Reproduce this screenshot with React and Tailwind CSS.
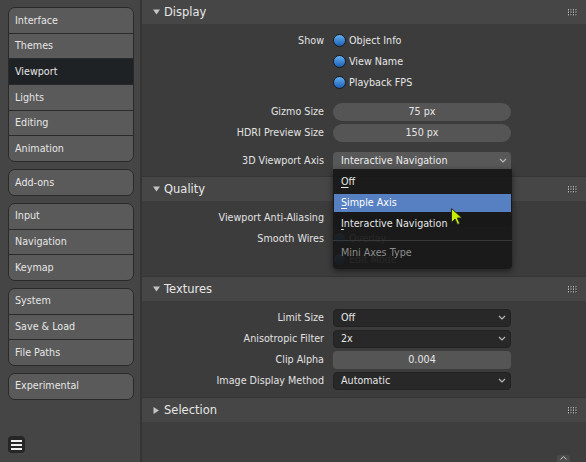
import React from "react";

const Chevron = () => (
  <svg width="8" height="5" viewBox="0 0 8 5" className="shrink-0">
    <polyline points="1,1 4,4 7,1" fill="none" stroke="#b8b8b8" strokeWidth="1.2" />
  </svg>
);

const Dots = () => (
  <svg width="9" height="7" viewBox="0 0 9 7">
    {[0, 2.5, 5, 7.5].map((x) =>
      [0, 2.5, 5].map((y) => (
        <g key={x + "-" + y}>
          <rect x={x + 0.5} y={y + 0.5} width="1" height="1.5" fill="#1e1e1e" />
          <rect x={x} y={y} width="1" height="1.5" fill="#bdbdbd" />
        </g>
      ))
    )}
  </svg>
);

function Group({ items, selected }) {
  return (
    <div className="w-[126px] rounded-[7px] border border-[#2a2a2a] overflow-hidden">
      {items.map((t, i) => (
        <div
          key={t}
          className={`flex items-center pl-[6px] ${
            i > 0 ? "h-[25.7px] border-t border-[#2a2a2a]" : "h-[24.7px]"
          } ${t === selected ? "bg-[#1f2225]" : "bg-[#5a5a5a]"}`}
        >
          {t}
        </div>
      ))}
    </div>
  );
}

function Header({ title, open = true }) {
  return (
    <div className="h-[24px] bg-[#464646] flex items-center pl-[11px] pr-[9px]">
      {open ? (
        <svg width="7" height="6" viewBox="0 0 7 6">
          <polygon points="0,0.5 7,0.5 3.5,5.5" fill="#c4c4c4" />
        </svg>
      ) : (
        <svg width="7" height="7" viewBox="0 0 7 7">
          <polygon points="0.5,0 6,3.5 0.5,7" fill="#c4c4c4" />
        </svg>
      )}
      <span className="ml-[4px] pt-[2px] text-[11.5px] text-[#e6e6e6]">{title}</span>
      <div className="ml-auto">
        <Dots />
      </div>
    </div>
  );
}

function Row({ label, children, className = "" }) {
  return (
    <div className={`flex h-[21px] items-center ${className}`}>
      <div className="w-[182px] text-right text-[#e2e2e2] whitespace-nowrap">{label}</div>
      <div className="ml-[9px] w-[178px] flex items-center">{children}</div>
    </div>
  );
}

function Check({ text }) {
  return (
    <div className="flex items-center">
      <div className="w-[13px] h-[13px] rounded-full border border-[#1b1b1b] bg-gradient-to-b from-[#62b0f4] to-[#1c5fb4]" />
      <span className="ml-[3px] text-[#e6e6e6]">{text}</span>
    </div>
  );
}

function Slider({ text }) {
  return (
    <div className="w-full h-[18px] rounded-[9px] bg-[#555555] flex items-center justify-center text-[#e6e6e6]">
      {text}
    </div>
  );
}

function Select({ text }) {
  return (
    <div className="w-full h-[18px] rounded-[4px] bg-[#282828] border border-[#222] flex items-center pl-[7px] pr-[4px] text-[#e6e6e6]">
      <span className="flex-1">{text}</span>
      <Chevron />
    </div>
  );
}

export default function App() {
  return (
    <div className="relative flex w-[586px] h-[462px] overflow-hidden bg-[#3e3e3e] text-[9.6px] leading-none font-['DejaVu_Sans','Liberation_Sans',sans-serif] select-none">
      {/* Sidebar */}
      <aside className="w-[140px] shrink-0 bg-[#454545] flex flex-col pl-[8px] pt-[7px] text-[#e6e6e6] gap-[7px]">
        <Group
          items={["Interface", "Themes", "Viewport", "Lights", "Editing", "Animation"]}
          selected="Viewport"
        />
        <Group items={["Add-ons"]} />
        <Group items={["Input", "Navigation", "Keymap"]} />
        <Group items={["System", "Save & Load", "File Paths"]} />
        <Group items={["Experimental"]} />
        <div className="mt-auto mb-[9px] w-[17px] h-[17px] rounded-[4px] bg-[#262626] flex flex-col items-center justify-center gap-[2px]">
          <div className="w-[11px] h-[2px] bg-[#f0f0f0]" />
          <div className="w-[11px] h-[2px] bg-[#f0f0f0]" />
          <div className="w-[11px] h-[2px] bg-[#f0f0f0]" />
        </div>
      </aside>

      {/* Main */}
      <main className="flex-1 border-l-2 border-[#353535] flex flex-col">
        {/* Display */}
        <section className="border-b border-[#353535]">
          <Header title="Display" />
          <div className="bg-[#3c3c3c] pt-[6px] pb-[5px]">
            <Row label="Show">
              <Check text="Object Info" />
            </Row>
            <Row label="">
              <Check text="View Name" />
            </Row>
            <Row label="">
              <Check text="Playback FPS" />
            </Row>
            <Row label="Gizmo Size" className="mt-[8px]">
              <Slider text="75 px" />
            </Row>
            <Row label="HDRI Preview Size">
              <Slider text="150 px" />
            </Row>
            <Row label="3D Viewport Axis" className="mt-[7px]">
              <div className="w-full h-[18px] rounded-t-[4px] bg-[#585858] flex items-center pl-[8px] pr-[4px] text-[#ececec]">
                <span className="flex-1">Interactive Navigation</span>
                <Chevron />
              </div>
            </Row>
          </div>
        </section>

        {/* Quality */}
        <section className="border-b border-[#353535]">
          <Header title="Quality" />
          <div className="bg-[#3c3c3c] pt-[6px] pb-[6px]">
            <Row label="Viewport Anti-Aliasing">
              <div className="w-full h-[18px] rounded-[4px] bg-[#282828]" />
            </Row>
            <Row label="Smooth Wires">
              <Check text="Overlay" />
            </Row>
            <Row label="">
              <Check text="Edit Mode" />
            </Row>
          </div>
        </section>

        {/* Textures */}
        <section className="border-b border-[#353535]">
          <Header title="Textures" />
          <div className="bg-[#3c3c3c] pt-[6px] pb-[6px]">
            <Row label="Limit Size">
              <Select text="Off" />
            </Row>
            <Row label="Anisotropic Filter">
              <Select text="2x" />
            </Row>
            <Row label="Clip Alpha">
              <div className="w-full h-[18px] rounded-[4px] bg-[#555555] flex items-center justify-center text-[#e6e6e6]">
                0.004
              </div>
            </Row>
            <Row label="Image Display Method">
              <Select text="Automatic" />
            </Row>
          </div>
        </section>

        {/* Selection */}
        <section>
          <Header title="Selection" open={false} />
        </section>
      </main>

      {/* Dropdown menu */}
      <div className="absolute left-[333px] top-[169px] w-[179px] h-[100px] bg-[#181818]/[0.93] rounded-b-[4px] shadow-[0_2px_6px_rgba(0,0,0,0.5)] flex flex-col pt-[4px] text-[#e6e6e6]">
        <div className="h-[18px] flex items-center pl-[8px]">
          <span>
            <span className="underline underline-offset-2">O</span>ff
          </span>
        </div>
        <div className="mt-[3px] mx-[1px] h-[18px] flex items-center pl-[7px] bg-[#5680c2] text-white">
          <span>
            <span className="underline underline-offset-2">S</span>imple Axis
          </span>
        </div>
        <div className="mt-[3px] h-[18px] flex items-center pl-[8px]">
          <span>
            <span className="underline underline-offset-2">I</span>nteractive Navigation
          </span>
        </div>
        <div className="mt-[7px] border-t border-[#383838]" />
        <div className="mt-[3px] h-[18px] flex items-center pl-[8px] text-[#8c8c8c]">Mini Axes Type</div>
      </div>

      {/* Mouse cursor */}
      <svg
        className="absolute left-[450px] top-[207px]"
        width="13"
        height="19"
        viewBox="0 0 13 19"
      >
        <path
          d="M1.5 1.5 L1.5 15.5 L5 12 L7.5 17.5 L9.8 16.5 L7.3 11 L12 11 Z"
          fill="#c3ee00"
          stroke="#2b2b2b"
          strokeWidth="1"
          strokeLinejoin="round"
        />
      </svg>

      {/* Bottom scroll tab */}
      <div className="absolute left-[557px] top-[455px] w-[13px] h-[10px] rounded-t-[3px] bg-[#4c4c4c] flex justify-center pt-[1px]">
        <svg width="7" height="4" viewBox="0 0 7 4">
          <polyline points="0.5,3.5 3.5,0.5 6.5,3.5" fill="none" stroke="#c8c8c8" strokeWidth="1" />
        </svg>
      </div>
    </div>
  );
}
